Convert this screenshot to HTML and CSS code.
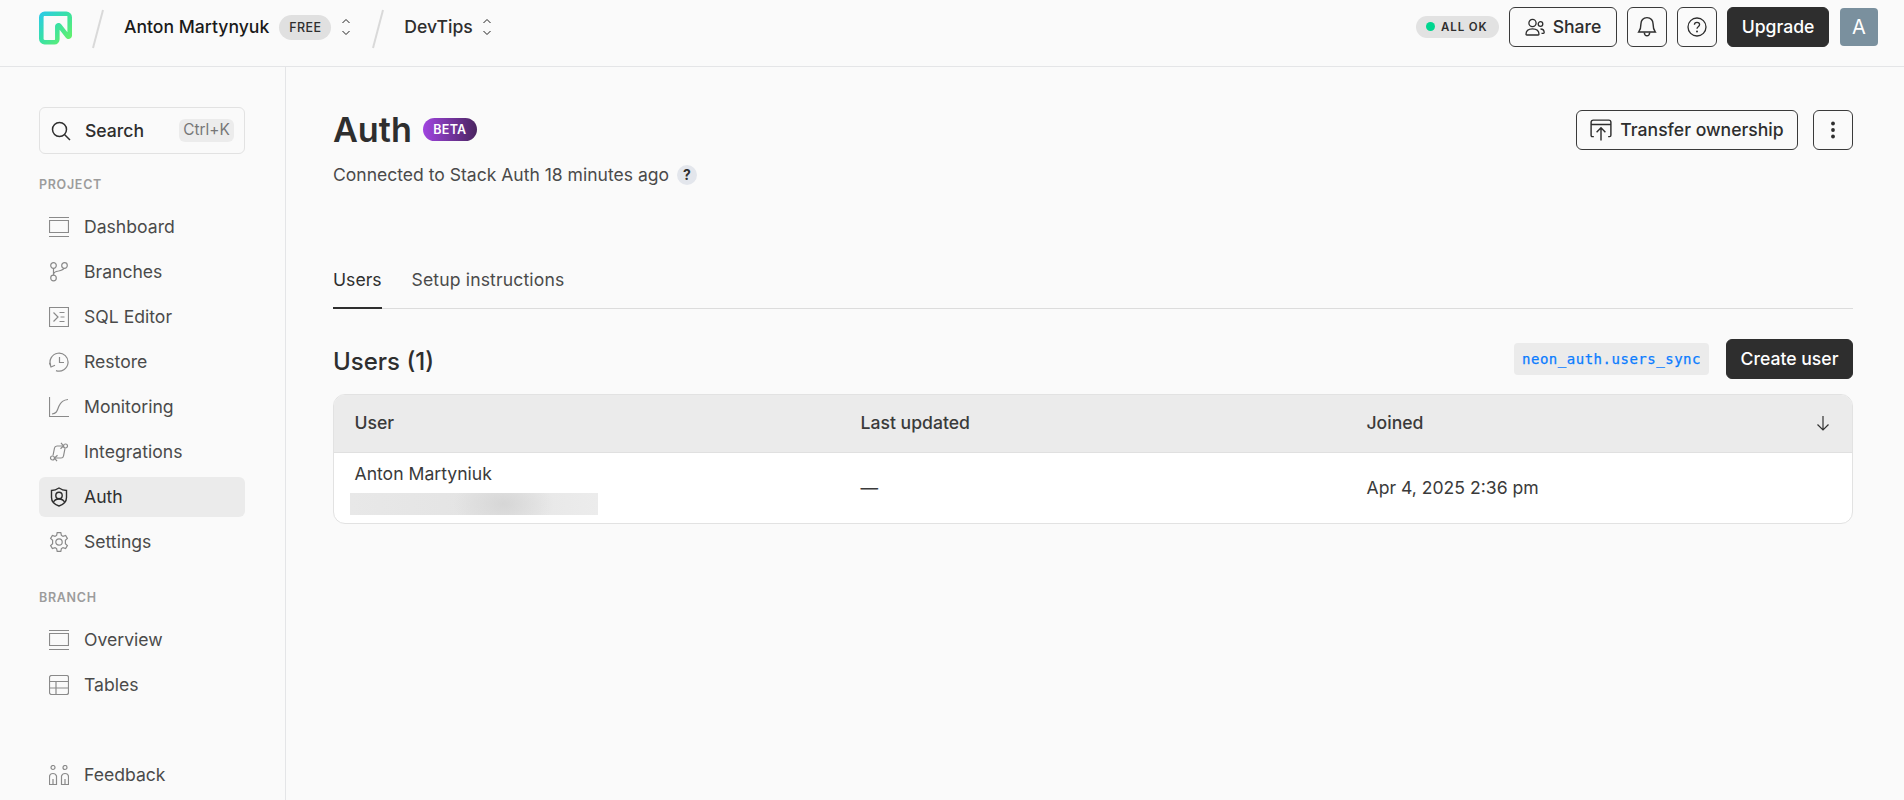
FILE: index.html
```html
<!DOCTYPE html>
<html lang="en">
<head>
<meta charset="utf-8">
<title>Auth</title>
<link rel="stylesheet" href="styles.css">
</head>
<body>
<header class="topbar">
  <svg class="logo" viewBox="0 0 36 36"><defs><linearGradient id="lg" x1="0" y1="0" x2="36" y2="36" gradientUnits="userSpaceOnUse"><stop offset="0" stop-color="#2bc8ee"/><stop offset=".45" stop-color="#37e0a8"/><stop offset="1" stop-color="#6ff55c"/></linearGradient></defs><path fill="url(#lg)" fill-rule="evenodd" d="M0 6.2A6.2 6.2 0 0 1 6.2 0h23.6A6.2 6.2 0 0 1 36 6.2v20.1c0 3.5-4.5 5.1-6.7 2.3l-6.8-8.8v10.6a5.6 5.6 0 0 1-5.600 5.600H6.200A6.200 6.200 0 0 1 0 29.800V6.200Zm6.200-1.200c-.7 0-1.200.5-1.200 1.200v23.600c0 .7.5 1.200 1.200 1.200h10.900c.3 0 .4-.3.4-.6V16.200c0-3.500 4.500-5.100 6.700-2.300l6.800 8.800V6.200c0-.7.1-1.200-.6-1.200H6.200Z"/></svg>
  <svg class="slash" viewBox="0 0 12 40"><path d="M11 1 1 39"/></svg>
  <span class="crumb crumb-user">Anton Martynyuk</span>
  <span class="plan">FREE</span>
  <svg class="chev" viewBox="0 0 10 20"><path d="M1.500 6 5 2.500 8.500 6M1.500 14 5 17.500 8.500 14"/></svg>
  <svg class="slash slash-2" viewBox="0 0 12 40"><path d="M11 1 1 39"/></svg>
  <span class="crumb">DevTips</span>
  <svg class="chev chev-2" viewBox="0 0 10 20"><path d="M1.500 6 5 2.500 8.500 6M1.500 14 5 17.500 8.500 14"/></svg>
  <div class="top-right">
    <span class="status"><i class="dot"></i>ALL OK</span>
    <button class="btn btn-share"><svg class="ico-20 ico-bold" viewBox="0 0 20 20"><circle cx="7.500" cy="6" r="3.600"/><path d="M1 17.200c0-3.600 2.700-5.400 6.500-5.400s6.500 1.800 6.500 5.400c0 .5-.3.800-.8.800H1.800c-.5 0-.8-.3-.8-.8Z"/><circle cx="15.500" cy="7" r="2.300"/><path d="M15.500 12c2.400 0 3.700 1.300 3.700 3.600 0 .5-.3.800-.8.800H16.500"/></svg>Share</button>
    <button class="btn btn-icon"><svg class="ico-22 ico-bold" viewBox="0 0 20 20"><path d="M10 1.500c-3.600 0-5.500 2.700-5.500 5.500 0 4-.6 5.600-2 7.500h15c-1.400-1.900-2-3.500-2-7.500 0-2.800-1.900-5.500-5.500-5.500Z"/><path d="M7.500 15c.2 1.700 1.200 3 2.500 3s2.300-1.300 2.500-3"/></svg></button>
    <button class="btn btn-icon"><svg class="ico-20 ico-bold" viewBox="0 0 20 20"><circle cx="10" cy="10" r="9"/><path d="M7.400 7.800C7.400 6.200 8.600 5.300 10 5.300s2.600.9 2.600 2.300c0 2.200-2.600 2.200-2.600 4.200"/><circle class="fill" cx="10" cy="14.500" r="1"/></svg></button>
    <button class="btn btn-dark btn-upgrade">Upgrade</button>
    <span class="avatar">A</span>
  </div>
</header>

<div class="shell">
  <aside class="sidebar">
    <div class="search">
      <svg class="ico-20 search-ico" viewBox="0 0 20 20"><circle cx="8.500" cy="8.500" r="7"/><path d="m13.700 13.700 5.300 5.300"/></svg>
      <span class="search-text">Search</span>
      <kbd class="kbd">Ctrl+K</kbd>
    </div>
    <div class="label label-project">PROJECT</div>
    <nav class="nav">
      <a class="item"><svg class="ico-20" viewBox="0 0 20 20"><path d="M0 .5h20M.5 3.500h19v12H.5zM0 19.500h20"/></svg>Dashboard</a>
      <a class="item"><svg class="ico-20" viewBox="0 0 20 20"><circle cx="4.500" cy="3.500" r="2.800"/><circle cx="15.500" cy="3.500" r="2.800"/><circle cx="4.500" cy="16" r="2.800"/><path d="M4.500 6.300v6.900M4.500 12.500c0-2.500 2-3 5-3.500 3-.6 5-1.500 5.500-2.800"/></svg>Branches</a>
      <a class="item"><svg class="ico-20" viewBox="0 0 20 20"><path d="M.5.500h19v19H.5z"/><path d="m4.500 5.500 4.500 4.500-4.500 4.500M10.500 5.500h5M11.500 10h4M10.500 14.500h5"/></svg>SQL Editor</a>
      <a class="item"><svg class="ico-20" viewBox="0 0 20 20"><path d="M1.700 13.500A9 9 0 1 1 7 18.600"/><path d="M10.500 5v5.500h4.500M.5 10.800l1.500 4.200 4-1.700"/></svg>Restore</a>
      <a class="item"><svg class="ico-20" viewBox="0 0 20 20"><path d="M.5 0v19.500H20"/><path d="M3 17c5-.5 5-3.500 7-8 1.500-3.500 3.500-6 9-6.500"/></svg>Monitoring</a>
      <a class="item"><svg class="ico-20" viewBox="0 0 20 20"><circle cx="16.500" cy="4" r="2"/><circle cx="3.500" cy="16" r="2"/><path d="M14.500 4H8c-1.500 0-2.300.8-2.500 2L4 13.500"/><path d="M12 .8 14.500 4 11.500 6.800"/><path d="M5.500 16H12c1.500 0 2.300-.8 2.500-2l1.500-7.500"/><path d="M8 19.200 5.500 16l3-2.800"/></svg>Integrations</a>
      <a class="item active"><svg class="ico-20" viewBox="0 0 20 20"><path d="M2.500 3.500c2.500 0 5-.8 7.500-2.500 2.500 1.700 5 2.500 7.500 2.500v7c0 4-3 7-7.500 8.500-4.500-1.500-7.500-4.500-7.500-8.500Z"/><circle cx="10" cy="8.500" r="3.200"/><path d="M4.500 15c1-2 3-3 5.500-3s4.500 1 5.500 3"/></svg>Auth</a>
      <a class="item"><svg class="ico-20" viewBox="0 0 20 20"><circle cx="10" cy="10" r="3.200"/><path d="M8.200.7h3.600l.6 2.700 1.600.9 2.600-.9 1.800 3.100-2 1.800v3.400l2 1.800-1.800 3.100-2.600-.9-1.600.9-.6 2.700H8.200l-.6-2.700-1.600-.9-2.600.9-1.800-3.100 2-1.800V8.300l-2-1.800 1.800-3.100 2.600.9 1.600-.9Z"/></svg>Settings</a>
    </nav>
    <div class="label label-branch">BRANCH</div>
    <nav class="nav">
      <a class="item"><svg class="ico-20" viewBox="0 0 20 20"><path d="M0 .5h20M.5 3.500h19v12H.5zM0 19.500h20"/></svg>Overview</a>
      <a class="item"><svg class="ico-20" viewBox="0 0 20 20"><rect x=".5" y=".5" width="19" height="19" rx="2"/><path d="M.5 6.500h19M.5 13h19M7 6.500v13"/></svg>Tables</a>
    </nav>
    <a class="item feedback"><svg class="ico-20" viewBox="0 0 20 20"><circle cx="4" cy="2.500" r="2"/><circle cx="16" cy="2.500" r="2"/><path d="M.5 19.500v-7.500c0-2 1.500-3.500 3.500-3.500s3 1 3.500 2.500v8.500H.5ZM4 14v5.500M19.500 19.500v-7.500c0-2-1.500-3.500-3.500-3.500s-3 1-3.500 2.500v8.500h7ZM16 14v5.500"/></svg>Feedback</a>
  </aside>

  <main class="main">
    <div class="title-row">
      <div class="title-left">
        <h1 class="title">Auth</h1>
        <span class="beta">BETA</span>
      </div>
      <div class="title-actions">
        <button class="btn btn-transfer"><svg class="ico-22 ico-bold" viewBox="0 0 20 20"><path d="M3.500 16H2.200C1.300 16 1 15.500 1 14.800V3c0-1.200.7-2 2-2h14c1.300 0 2 .8 2 2v11.800c0 .7-.3 1.200-1.200 1.200h-1.300M1 5h18"/><path d="M10 19.500V8.500M6 12l4-4 4 4"/></svg>Transfer ownership</button>
        <button class="btn btn-icon btn-more"><svg class="ico-20" viewBox="0 0 20 20"><circle class="fill" cx="10" cy="3.500" r="1.900"/><circle class="fill" cx="10" cy="10" r="1.900"/><circle class="fill" cx="10" cy="16.500" r="1.900"/></svg></button>
      </div>
    </div>
    <p class="subtitle">Connected to Stack Auth 18 minutes ago <span class="hint">?</span></p>

    <div class="tabs">
      <span class="tab tab-on">Users</span>
      <span class="tab tab-off">Setup instructions</span>
    </div>

    <div class="section-head">
      <h2 class="section-title">Users (1)</h2>
      <div class="section-actions">
        <code class="chip">neon_auth.users_sync</code>
        <button class="btn btn-dark btn-create">Create user</button>
      </div>
    </div>

    <div class="table">
      <div class="thead">
        <div class="th">User</div>
        <div class="th">Last updated</div>
        <div class="th th-sort">Joined<svg class="sort" viewBox="0 0 14 16"><path d="M7 1v14M1.500 9.500 7 15l5.500-5.500"/></svg></div>
      </div>
      <div class="tbody">
        <div class="td td-user"><span>Anton Martyniuk</span><span class="blur"></span></div>
        <div class="td">—</div>
        <div class="td">Apr 4, 2025 2:36 pm</div>
      </div>
    </div>
  </main>
</div>
</body>
</html>
```

FILE: styles.css
```css
* { box-sizing: border-box; }
html, body { height: 100%; }
body {
  margin: 0;
  background: #fafafa;
  color: #2e2e2e;
  font-family: Inter, "Noto Sans", sans-serif;
  font-size: 17.6px;
  line-height: 24px;
  overflow: hidden;
  display: flex;
  flex-direction: column;
}
svg { fill: none; stroke: currentColor; stroke-width: 1; flex: none; }
svg .fill { fill: currentColor; stroke: none; }
button { font: inherit; color: inherit; background: none; cursor: pointer; }

.topbar {
  height: 67px;
  flex: none;
  display: flex;
  align-items: center;
  padding: 0 26px 0 39px;
  border-bottom: 1px solid #e4e5e7;
}
.logo { width: 33px; height: 36px; stroke: none; margin-top: -10px; }
.slash { width: 12px; height: 40px; color: #d9d9d9; stroke-width: 2; margin-top: -8px; margin-left: 20px; }
.slash-2 { margin-left: 21px; }
.crumb { font-weight: 500; font-size: 17.600px; margin-left: 20px; margin-top: -13px; }
.crumb-user { color: #1a1a1a; }
.plan {
  margin-left: 10px;
  margin-top: -11px;
  width: 52px;
  height: 25px;
  border-radius: 13px;
  background: #e0e0e0;
  font-size: 12.500px;
  font-weight: 500;
  letter-spacing: .4px;
  line-height: 25px;
  text-align: center;
}
.chev { width: 10px; height: 20px; margin-left: 10px; margin-top: -12px; color: #222; }
.chev-2 { margin-left: 9px; }
.top-right { margin-left: auto; display: flex; align-items: center; margin-top: -13px; }
.status {
  display: flex;
  align-items: center;
  gap: 6px;
  width: 83px;
  height: 22px;
  padding-left: 10px;
  border-radius: 11px;
  background: #e2e2e2;
  font-size: 11.500px;
  font-weight: 600;
  letter-spacing: .9px;
}
.dot { width: 9px; height: 9px; border-radius: 50%; background: #00d68f; }
.btn {
  height: 40px;
  display: inline-flex;
  align-items: center;
  justify-content: center;
  border: 1px solid #3a3a3a;
  border-radius: 6px;
  padding: 0;
  font-weight: 500;
}
.btn-share { width: 108px; margin-left: 10px; gap: 8px; }
.btn-icon { width: 40px; margin-left: 10px; }
.btn-dark { background: #2e2e2e; border-color: #2e2e2e; color: #fff; }
.btn-upgrade { width: 102px; margin-left: 10px; }
.avatar {
  width: 38px;
  height: 38px;
  margin-left: 11px;
  border-radius: 4px;
  background: #7a909e;
  color: #fff;
  font-size: 20px;
  line-height: 38px;
  text-align: center;
}
.shell { flex: 1; display: flex; min-height: 0; }
.sidebar {
  width: 286px;
  flex: none;
  display: flex;
  flex-direction: column;
  padding: 40px 40px 5px 39px;
  border-right: 1px solid #e4e5e7;
}
.search {
  height: 47px;
  display: flex;
  align-items: center;
  padding: 0 10px 0 11px;
  border: 1px solid #e2e2e2;
  border-radius: 6px;
}
.search-ico { color: #2e2e2e; stroke-width: 1.500; }
.search-text { margin-left: 14px; font-weight: 500; }
.kbd {
  margin-left: auto;
  width: 55px;
  height: 23px;
  border-radius: 6px;
  background: #ececec;
  color: #777;
  font: 15.400px/21px Inter, sans-serif;
  text-align: center;
}
.label { font-size: 12.500px; line-height: 16px; font-weight: 600; letter-spacing: .7px; color: #9c9c9c; }
.label-project { margin: 23px 0 14px; }
.label-branch { margin: 28px 0 14px; }
.nav { display: flex; flex-direction: column; gap: 5px; }
.item {
  height: 40px;
  display: flex;
  align-items: center;
  gap: 15px;
  padding-left: 10px;
  border-radius: 6px;
  color: #4a4a4a;
  font-weight: 400;
}
.item svg { width: 20px; height: 20px; color: #8a8a8a; stroke-width: 1.200; }
.item.active { background: #ebebeb; color: #2e2e2e; }
.item.active svg { color: #2e2e2e; stroke-width: 1.400; }
.feedback { margin-top: auto; }
.ico-20 { width: 20px; height: 20px; }
.ico-22 { width: 22px; height: 22px; }
.ico-bold { stroke-width: 1.300; }

.main { flex: 1; min-width: 0; padding: 43px 51px 0 47px; }
.title-row { display: flex; justify-content: space-between; align-items: flex-start; }
.title-left { display: flex; align-items: center; height: 40px; gap: 11px; }
.title { margin: 0; font-size: 34.200px; line-height: 40px; font-weight: 600; }
.beta {
  width: 54px;
  height: 23px;
  margin-top: -1px;
  border-radius: 12px;
  background: linear-gradient(90deg, #a044e0, #4a2560);
  color: #fff;
  font-size: 12.500px;
  font-weight: 600;
  line-height: 23px;
  letter-spacing: .3px;
  text-align: center;
}
.title-actions { display: flex; }
.btn-transfer { width: 222px; gap: 8px; }
.btn-more { margin-left: 15px; }
.subtitle { margin: 13px 0 0; color: #4a4a4a; font-size: 17.550px; display: flex; align-items: center; gap: 8px; }
.hint {
  width: 20px;
  height: 20px;
  border-radius: 50%;
  background: #e3e6ec;
  color: #2e2e2e;
  font-size: 14px;
  font-weight: 700;
  line-height: 20px;
  text-align: center;
}
.tabs { margin-top: 81px; display: flex; gap: 30px; border-bottom: 1px solid #dcdcdc; height: 41px; }
.tab { height: 41px; color: #4a4a4a; font-weight: 400; }
.tab-on { color: #2e2e2e; border-bottom: 2px solid #2e2e2e; }
.tab-off { letter-spacing: .13px; }
.section-head { margin-top: 30px; display: flex; justify-content: space-between; align-items: center; }
.section-title { margin: 6px 0 0; font-size: 24px; line-height: 32px; font-weight: 500; }
.section-actions { display: flex; align-items: center; gap: 17px; }
.chip {
  width: 195px;
  height: 32px;
  border-radius: 4px;
  background: #ebebeb;
  color: #0a7cff;
  font-family: "DejaVu Sans Mono", monospace;
  font-size: 14px;
  -webkit-text-stroke: .25px #0a7cff;
  letter-spacing: .52px;
  line-height: 32px;
  text-align: center;
}
.btn-create { width: 127px; }
.table {
  margin-top: 15px;
  border: 1px solid #e2e2e2;
  border-radius: 12px;
  overflow: hidden;
  background: #fff;
}
.thead, .tbody { display: grid; grid-template-columns: repeat(3, 1fr); }
.thead { height: 58px; background: #ebebeb; border-bottom: 1px solid #e0e0e0; }
.tbody { height: 70px; }
.th { display: flex; align-items: center; padding: 0 0 2px 20.500px; font-weight: 500; color: #3a3a3a; }
.th-sort { justify-content: space-between; padding-right: 22px; }
.sort { width: 14px; height: 16px; color: #333; stroke-width: 1.200; }
.td { display: flex; align-items: center; padding-left: 20.500px; color: #3a3a3a; }
.td-user { flex-direction: column; align-items: flex-start; padding-top: 9px; }
.blur {
  display: block;
  width: 248px;
  height: 22px;
  margin: 7px 0 0 -5px;
  background:
    radial-gradient(ellipse 50px 30px at 62% 50%, #d6d6d6, transparent),
    linear-gradient(90deg, #e8e8e8, #e4e4e4 50%, #ececec);
}
```
